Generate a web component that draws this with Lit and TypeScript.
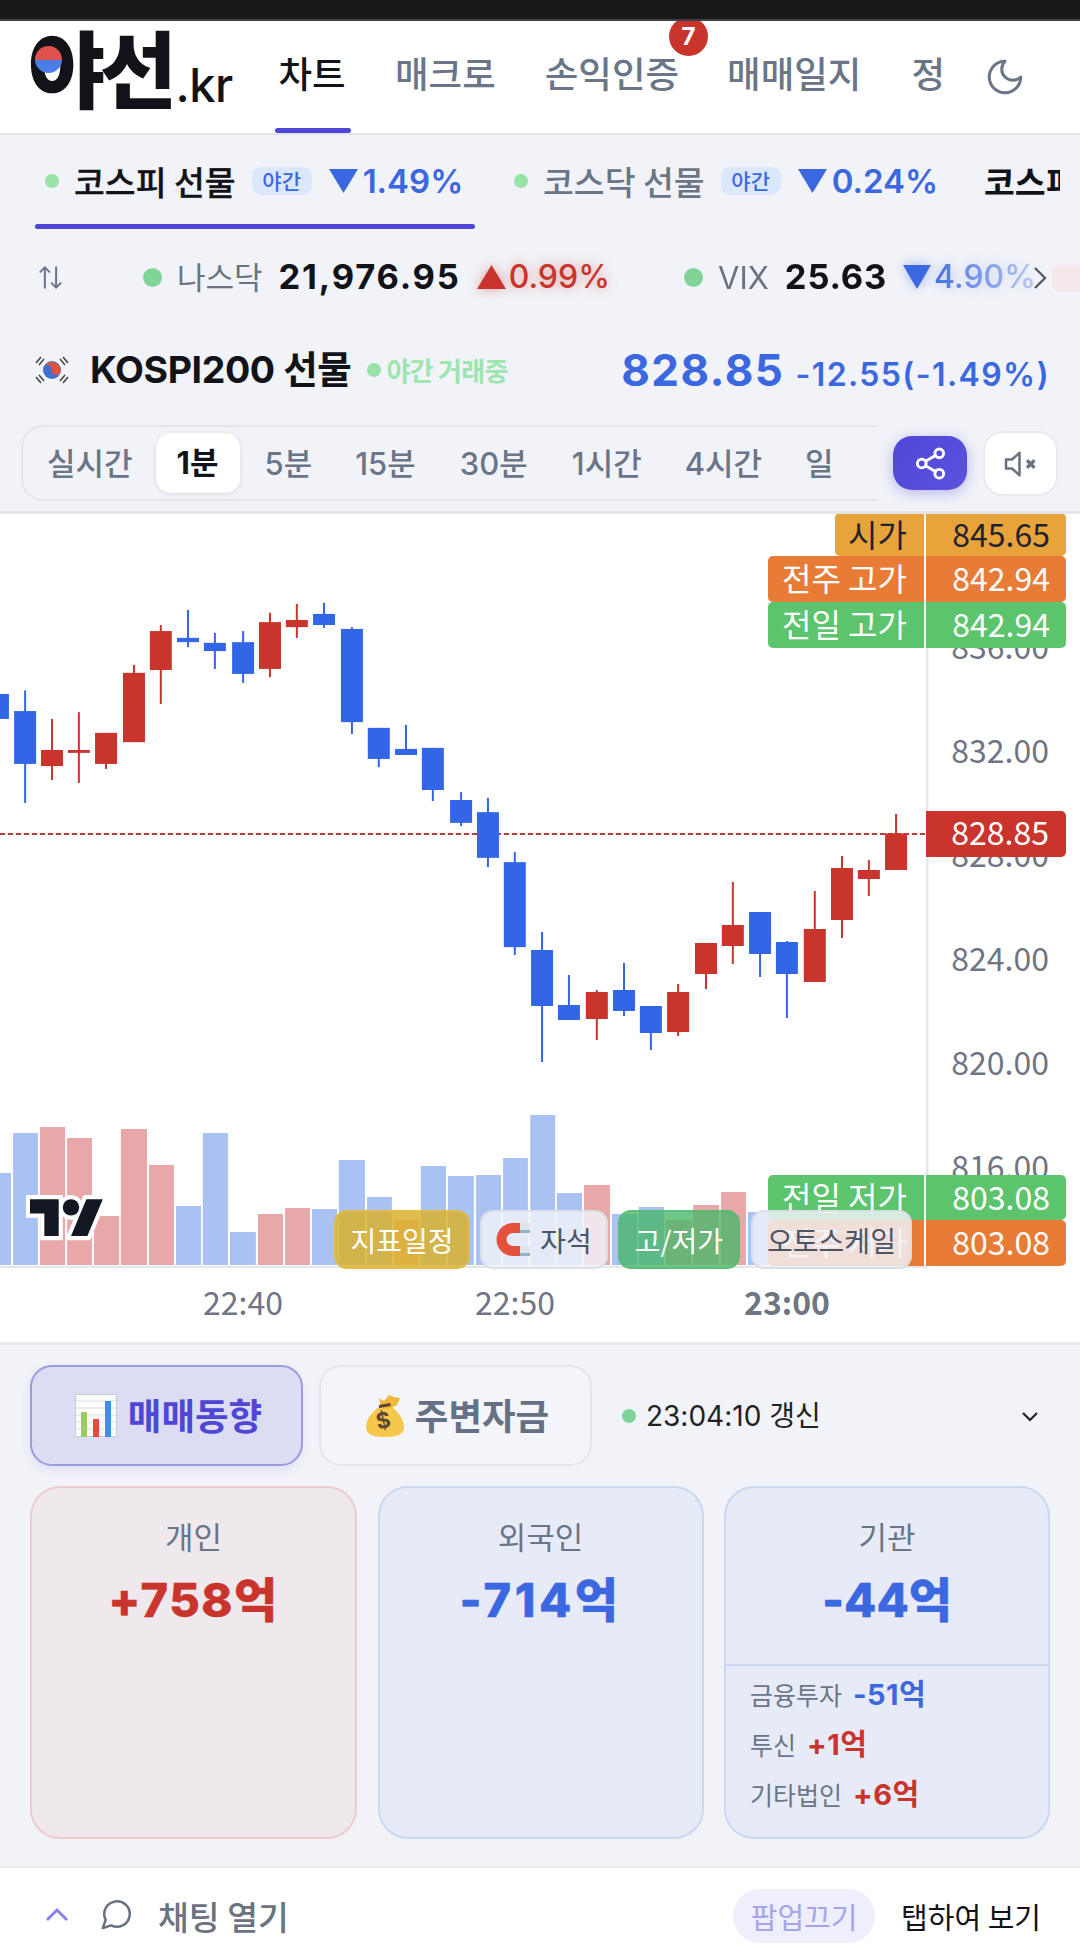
import { LitElement, html, css, svg } from "lit";
import { customElement } from "lit/decorators.js";

const RED = "#c9342c";
const BLUE = "#3366e6";
// [cx, top, bottom, wickTop, wickBottom, isRed] in page pixels
const z5 = (cx: number, t: number, b: number, wt: number, wb: number, r: number) =>
  [cx / 2.904, 510 + t / 2.8, 510 + b / 2.8, 510 + wt / 2.8, 510 + wb / 2.8, r];
const z11 = (cx: number, t: number, b: number, wt: number, wb: number, r: number) =>
  [540 + cx / 2.904, 660 + t / 3, 660 + b / 3, 660 + wt / 3, 660 + wb / 3, r];
const candles = [
  z5(-6, 515, 585, 515, 585, 0), z5(73, 563, 711, 505, 820, 0), z5(151, 672, 717, 585, 756, 1),
  z5(229, 672, 680, 566, 764, 1), z5(308, 624, 711, 624, 725, 1), z5(389, 456, 650, 434, 650, 1),
  z5(467, 339, 448, 322, 543, 1), z5(546, 358, 370, 280, 384, 0), z5(624, 372, 395, 344, 445, 0),
  z5(706, 370, 459, 339, 484, 0), z5(784, 314, 445, 288, 468, 1), z5(862, 308, 328, 263, 358, 1),
  z5(941, 291, 322, 260, 330, 0), z5(1022, 333, 594, 328, 627, 0), z5(1100, 610, 697, 610, 720, 0),
  z5(1179, 669, 686, 602, 686, 0), z5(1257, 666, 784, 666, 815, 0), z5(1339, 812, 876, 790, 885, 0),
  z5(1417, 846, 974, 806, 1000, 0), z5(1495, 986, 1224, 958, 1246, 0),
  z11(6, 870, 1038, 816, 1206, 0), z11(84, 1035, 1080, 945, 1080, 0), z11(165, 996, 1077, 990, 1140, 1),
  z11(244, 990, 1053, 909, 1068, 0), z11(322, 1038, 1119, 1038, 1170, 0), z11(401, 996, 1116, 972, 1128, 1),
  z11(482, 849, 942, 849, 987, 1), z11(560, 795, 858, 666, 912, 1), z11(639, 756, 882, 756, 951, 0),
  z11(717, 846, 942, 843, 1074, 0), z11(798, 807, 966, 693, 966, 1), z11(877, 624, 780, 588, 834, 1),
  z11(955, 630, 657, 600, 708, 1), z11(1034, 520, 630, 462, 630, 1),
];
// volume: [left, right, top, isRed] in page px
const vz = (l: number, r: number, t: number, red: number) => [l / 2.904, r / 2.904, 1070 + t / 3, red];
const vz7 = (l: number, r: number, t: number, red: number) => [540 + l / 2.904, 540 + r / 2.904, 1070 + t / 3, red];
const vols = [
  vz(-30, 32, 309, 0), vz(38, 110, 189, 0), vz(116, 189, 171, 1), vz(195, 267, 204, 1), vz(273, 346, 438, 1),
  vz(351, 427, 177, 1), vz(433, 505, 285, 1), vz(511, 584, 408, 0), vz(589, 662, 189, 0), vz(668, 743, 486, 0),
  vz(749, 822, 432, 1), vz(828, 900, 414, 1), vz(906, 979, 417, 0), vz(984, 1060, 270, 0), vz(1066, 1138, 381, 0),
  vz(1144, 1216, 450, 1), vz(1222, 1295, 288, 0), vz(1301, 1376, 318, 0), vz(1382, 1455, 315, 0), vz(1461, 1533, 264, 0),
  [530.3, 555.2, 1070 + 135 / 3, 0], vz7(49, 122, 369, 0), vz7(128, 203, 345, 1), vz7(209, 282, 432, 0), vz7(287, 360, 411, 0),
  vz7(365, 440, 450, 1), vz7(445, 520, 405, 1), vz7(526, 598, 366, 1), vz7(604, 680, 426, 0), vz7(686, 760, 440, 1),
];
const ticks = [["836.00", 648], ["832.00", 752], ["828.00", 856], ["824.00", 960], ["820.00", 1064], ["816.00", 1168]];
const tags = [
  { y: 513, h: 43, lx: 835, bg: "#e8a33a", fg: "#1f2430", l: "시가", v: "845.65" },
  { y: 556, h: 46, lx: 768, bg: "#e87b35", fg: "#fff", l: "전주 고가", v: "842.94" },
  { y: 602, h: 46, lx: 768, bg: "#5cc46c", fg: "#fff", l: "전일 고가", v: "842.94" },
  { y: 1175, h: 45, lx: 768, bg: "#5cc46c", fg: "#fff", l: "전일 저가", v: "803.08" },
  { y: 1220, h: 46, lx: 768, bg: "#e87b35", fg: "#fff", l: "전주 저가", v: "803.08" },
];

const tri = (up: boolean, w: number, h: number, c: string) => html`<svg class="tri ${up ? "up" : "dn"}" width=${w} height=${h} viewBox="0 0 10 10" preserveAspectRatio="none"><polygon points=${up ? "0,10 10,10 5,0" : "0,0 10,0 5,10"} fill=${c}></polygon></svg>`;

@customElement("app-root")
export class AppRoot extends LitElement {
  static styles = css`
    :host { display: block; width: 1080px; height: 1945px; overflow: hidden; background: #f1f3f8; position: relative;
      font-family: Inter, "Noto Sans CJK KR", sans-serif; color: #111318; font-variant-numeric: tabular-nums; }
    * { box-sizing: border-box; }
    .status { height: 21px; background: #18181b; border-bottom: 2px solid #3f3f46; position: relative; z-index: 3; }
    header { height: 114px; background: #fff; border-bottom: 2px solid #e4e5e9; display: flex; align-items: flex-start; position: relative; overflow: visible; }
    .logo { position: relative; display: flex; align-items: baseline; margin-left: 28px; width: 248px; height: 112px; line-height: 1; flex: none; }
    .logo b { font: 900 84px/1 "Noto Sans CJK KR", sans-serif; letter-spacing: -5.5px; margin-top: 3px; color: #111318; }
    .logo span { font: 500 47px/1 Inter, sans-serif; margin-left: 4px; letter-spacing: -.5px; color: #111318; }
    .logo i { position: absolute; left: 7px; top: 25px; width: 27px; height: 27px; border-radius: 50%; overflow: hidden;
      background: linear-gradient(#e0514b 0 50%, #4a7de8 50% 100%); }
    nav { display: flex; font: 500 36.5px/1 "Noto Sans CJK KR", sans-serif; color: #6b7588; }
    nav a { display: block; position: relative; height: 112px; line-height: 103px; white-space: nowrap; flex: none; }
    nav a.on { color: #111318; width: 72px; text-align: center; }
    nav a.on::after { content: ""; position: absolute; left: -1px; right: -3px; bottom: 0; height: 5px; border-radius: 3px; background: #4f46d5; }
    .badge { position: absolute; left: 669px; top: -4px; width: 39px; height: 39px; border-radius: 50%; background: #c9342c; color: #fff;
      font: 700 24px/39px Inter, sans-serif; text-align: center; }
    .moon { position: absolute; left: 984px; top: 35px; }

    .tabs { height: 95px; display: flex; position: relative; overflow: hidden; width: 1060px; }
    .tab { position: relative; display: flex; align-items: center; height: 92px; flex: none; }
    .tab .dot { width: 14px; height: 14px; border-radius: 50%; background: #97e3a8; flex: none; }
    .tab .nm { font: 500 33.500px/1 "Noto Sans CJK KR", sans-serif; white-space: nowrap; }
    .tab .bd { width: 60px; height: 28px; border-radius: 9px; background: #dbe7fb; color: #3b67e0; font: 500 21px/27px "Noto Sans CJK KR", sans-serif; text-align: center; flex: none; margin-left: 16px; }
    .tab .pc { font: 600 33px/1 Inter, sans-serif; color: #3b67e0; }
    .tab .tri { margin-left: 17px; margin-right: 5px; }
    .tab.a { width: 479px; padding-left: 45px; }
    .tab.a::after { content: ""; position: absolute; left: 35px; width: 440px; top: 89px; height: 5px; border-radius: 3px; background: #4f46d5; }
    .tab.a .nm { margin-left: 15px; font-weight: 500; -webkit-text-stroke: .3px #111318; }
    .tab.b { width: 471px; padding-left: 35px; } .tab.b .nm { margin-left: 15px; color: #6b7588; font-weight: 500; }
    .tab.c { padding-left: 34px; } .tab.c .nm { font-weight: 700; color: #111318; }

    .ticker { height: 94px; display: flex; align-items: center; position: relative; }
    .arrows { margin-left: 37px; margin-right: 79px; flex: none; }
    .tk { display: flex; align-items: center; flex: none; white-space: nowrap; }
    .tk .d { width: 19px; height: 19px; border-radius: 50%; background: #80d498; flex: none; }
    .tk .n { font: 400 31px/1 Inter, "Noto Sans CJK KR", sans-serif; color: #6b7280; margin-left: 15px; }
    .tk .p { font: 700 34.500px/1 Inter, sans-serif; margin-left: 16px; letter-spacing: 1.8px; }
    .tk .c { font: 500 32px/1 Inter, sans-serif; margin-left: 3px; }
    .tk .tri { margin-left: 16px; }
    .tk .c.up { color: #c9342c; text-shadow: 0 0 12px rgba(201,52,44,.45); }
    .tk .c.dn { color: #3b67e0; text-shadow: 0 0 12px rgba(59,103,224,.4); }
    .tk .tri.up { filter: drop-shadow(0 0 6px rgba(201,52,44,.45)); }
    .tk .tri.dn { filter: drop-shadow(0 0 6px rgba(59,103,224,.45)); }
    .tk2 { position: absolute; left: 684px; top: 0; height: 94px; width: 352px; overflow: hidden;
      -webkit-mask-image: linear-gradient(90deg, #000 0 240px, rgba(0,0,0,.3) 100%); mask-image: linear-gradient(90deg, #000 0 240px, rgba(0,0,0,.3) 100%); }
    .tk2 .p { letter-spacing: .8px; }
    .next { position: absolute; left: 1033px; top: 36px; }
    .ghost { position: absolute; left: 1052px; top: 35px; width: 40px; height: 27px; border-radius: 8px; background: #f6e8ea; }

    .title { height: 92px; display: flex; align-items: center; padding-left: 34px; position: relative; white-space: nowrap; }
    .title h1 { margin: 0 0 0 20px; font: 700 37.5px/1 Inter, "Noto Sans CJK KR", sans-serif; letter-spacing: -.4px; }
    .title .d { width: 14px; height: 14px; border-radius: 50%; background: #97e3a8; margin-left: 16px; flex: none; }
    .title .live { font: 600 26px/1 "Noto Sans CJK KR", sans-serif; color: #9ce5ae; margin-left: 5px; letter-spacing: -.7px; }
    .price { margin-left: auto; margin-right: 30px; display: flex; align-items: baseline; color: #3b67e0; }
    .price b { font: 700 44px/1 Inter, sans-serif; letter-spacing: 1.5px; }
    .price span { font: 600 32px/1 Inter, sans-serif; margin-left: 11px; letter-spacing: 1.4px; }

    .tfrow { height: 95px; position: relative; padding: 9px 0 0 21px; }
    .tf { width: 857px; height: 76px; border: 2px solid #e2e5ea; border-right: 0; border-radius: 22px 0 0 22px; display: flex; align-items: center; overflow: hidden; position: relative;
      font: 500 31px/1 Inter, "Noto Sans CJK KR", sans-serif; color: #6b7588; white-space: nowrap; padding-left: 24px; }
    .tf span { flex: none; }
    .tf .on { background: #fff; color: #111318; font-weight: 700; width: 84px; height: 60px; border-radius: 15px; line-height: 60px; text-align: center; box-shadow: 0 1px 5px rgba(0,0,0,.1); }
    .share { position: absolute; left: 893px; top: 20px; width: 74px; height: 54px; border-radius: 19px; background: linear-gradient(135deg,#4f46d5,#5c54e0); display: flex; align-items: center; justify-content: center; box-shadow: 0 3px 14px rgba(79,70,213,.35); }
    .mute { position: absolute; left: 983px; top: 15px; width: 75px; height: 65px; border-radius: 20px; background: #fff; border: 2px solid #e8eaef; display: flex; align-items: center; justify-content: center; }

    .chart { height: 834px; border-top: 3px solid #e3e5ea; background: #fff; position: relative; border-bottom: 3px solid #e9eaee; overflow: hidden; }
    .chart svg.cv { display: block; }
    .ax { font: 400 32px "Noto Sans CJK KR", sans-serif; fill: #6f7582; }
    .tag { position: absolute; display: flex; font: 400 32px/1 "Noto Sans CJK KR", sans-serif; border-radius: 0 5px 5px 0; }
    .tag .lb { position: absolute; top: 0; bottom: 0; right: 142px; display: flex; align-items: center; justify-content: flex-end; padding: 0 17px 4px 0; border-radius: 5px 0 0 5px; white-space: nowrap; }
    .tag .vl { width: 140px; height: 100%; display: flex; align-items: center; justify-content: flex-end; padding: 0 16px 4px 0; border-radius: 0 5px 5px 0; }
    .tools { position: absolute; left: 334px; top: 696px; display: flex; gap: 10px; }
    .tool { height: 59px; border-radius: 13px; display: flex; align-items: center; justify-content: center; gap: 9px; font: 400 28px/1 "Noto Sans CJK KR", sans-serif; white-space: nowrap; border: 2px solid transparent; flex: none; }
    .tool.g { width: 136px; background: rgba(218,178,44,.84); color: #fff; border-color: rgba(226,190,70,.7); }
    .tool.m { width: 128px; background: rgba(240,242,248,.84); color: #4b5563; border-color: rgba(216,219,228,.8); }
    .tool.h { width: 122px; background: rgba(72,182,104,.78); color: #fff; border-color: rgba(80,190,110,.6); }
    .tool.a { width: 161px; background: rgba(240,242,248,.84); color: #4b5563; border-color: rgba(216,219,228,.9); margin-left: 1px; }

    .flow { padding: 20px 30px 0 30px; height: 521px; }
    .sw { display: flex; align-items: stretch; height: 101px; gap: 16px; }
    .st { width: 273px; border-radius: 22px; border: 2px solid #e4e6ec; background: #f3f5fa; display: flex; align-items: center; justify-content: center; gap: 11px; padding-left: 4px; font: 700 36.5px/1 "Noto Sans CJK KR", sans-serif; color: #667085; flex: none; }
    .st.on { background: #dcdcf3; border-color: #9c9ae0; color: #4f46d5; box-shadow: 0 4px 10px rgba(79,70,213,.1); }
    .upd { display: flex; align-items: center; margin-left: 14px; font: 400 28px/1 Inter, "Noto Sans CJK KR", sans-serif; color: #222; flex: 1; }
    .upd i { width: 14px; height: 14px; border-radius: 50%; background: #80d498; margin-right: 10px; }
    .upd svg { margin-left: auto; margin-right: 8px; }
    .cards { display: grid; grid-template-columns: 327px 326px 326px; column-gap: 20.5px; margin-top: 20px; height: 353px; }
    .card { border-radius: 30px; border: 2px solid #cbd8f1; background: #e7ebf7; text-align: center; overflow: hidden; display: flex; flex-direction: column; }
    .card.r { background: #efe8ec; border-color: #ebcdcf; }
    .card .top { height: 176px; padding-top: 28px; flex: none; }
    .card .l { font: 400 31px/40px "Noto Sans CJK KR", sans-serif; color: #6b7588; }
    .card .v { font: 800 47px/60px Inter, "Noto Sans CJK KR", sans-serif; margin-top: 14px; letter-spacing: 1.500px; -webkit-text-stroke: .4px currentColor; }
    .card .v.wide { letter-spacing: 3.5px; }
    .card .v.tight { letter-spacing: 0; }
    .v.r, .s b.r { color: #c9342c; } .v.b, .s b.b { color: #3b67e0; }
    .sub { border-top: 2px solid #cbd8f1; padding: 3px 0 0 24px; text-align: left; }
    .s { height: 50px; display: flex; align-items: center; gap: 11px; font: 400 25px/1 "Noto Sans CJK KR", sans-serif; color: #6b7588; }
    .s b { font: 700 29px/1 Inter, "Noto Sans CJK KR", sans-serif; letter-spacing: .5px; }

    footer { height: 79px; background: #fff; border-top: 2px solid #e9eaee; display: flex; align-items: center; position: absolute; left: 0; right: 0; top: 1866px; padding-top: 15px; }
    footer .up { margin-left: 44px; flex: none; }
    footer .ch { margin-left: 30px; flex: none; }
    footer .tt { font: 500 33.500px/1 "Noto Sans CJK KR", sans-serif; color: #6b7280; margin: 3px 0 0 24px; }
    footer .pill { margin-left: auto; width: 142px; height: 54px; border-radius: 27px; background: #eeeefc; color: #a5a5ea; font: 400 29px/54px "Noto Sans CJK KR", sans-serif; text-align: center; align-self: flex-start; margin-top: 6px; }
    footer .hint { font: 400 29px/54px "Noto Sans CJK KR", sans-serif; color: #111318; margin: 6px 39px 0 26px; align-self: flex-start; }
  `;

  chart() {
    return svg`
      ${vols.map((v) => svg`<rect x=${v[0]} y=${v[2]} width=${v[1] - v[0]} height=${1265 - v[2]} fill=${v[3] ? "#e8a7a9" : "#a9c1f3"}></rect>`)}
      ${ticks.map((t) => svg`<text class="ax" x="1049" y=${(t[1] as number) + 11} text-anchor="end">${t[0]}</text>`)}
      <line x1="0" x2="926" y1="834" y2="834" stroke="#b5403b" stroke-width="2" stroke-dasharray="5 3"></line>
      ${candles.map((c) => svg`<g fill=${c[5] ? RED : BLUE}>
        <rect x=${c[0] - 1} y=${c[3]} width="2" height=${c[4] - c[3]}></rect>
        <rect x=${c[0] - 11} y=${c[1]} width="22" height=${c[2] - c[1]}></rect></g>`)}
      <rect x="926" y="511" width="2.5" height="757" fill="#e5e7eb"></rect>
      <rect x="0" y="1266" width="928" height="2" fill="#e5e7eb"></rect>
      <text class="ax" x="243" y="1315" text-anchor="middle">22:40</text>
      <text class="ax" x="515" y="1315" text-anchor="middle">22:50</text>
      <text class="ax" x="787" y="1315" text-anchor="middle" style="font-weight:700">23:00</text>
      <g transform="translate(30,1191) scale(2.05)">
        <g stroke="#fff" stroke-width="4" fill="#fff"><path d="M14 22H7V11H0V4h14v18zM28 22h-8l7.5-18h8L28 22z"></path><circle cx="20" cy="8" r="4"></circle></g>
        <g fill="#131722"><path d="M14 22H7V11H0V4h14v18zM28 22h-8l7.5-18h8L28 22z"></path><circle cx="20" cy="8" r="4"></circle></g>
      </g>
      <path d="M926 811h135a5 5 0 0 1 5 5v36a5 5 0 0 1-5 5H926z" fill="#c9342c"></path>
      <text x="1049" y="845" text-anchor="end" class="ax" style="fill:#fff">828.85</text>
    `;
  }

  render() {
    return html`
      <div class="status"></div>
      <header>
        <div class="logo"><b>야선</b><span>.kr</span><i></i></div>
        <nav>
          <a class="on">차트</a>
          <a style="margin-left:47px">매크로</a>
          <a style="margin-left:49px">손익인증</a>
          <a style="margin-left:48px">매매일지</a>
          <a style="margin-left:50px">정</a>
        </nav>
        <span class="badge">7</span>
        <svg class="moon" width="42" height="42" viewBox="0 0 24 24" fill="none" stroke="#6b7588" stroke-width="1.7" stroke-linecap="round" stroke-linejoin="round"><path d="M12 3a6 6 0 0 0 9 9 9 9 0 1 1-9-9Z"></path></svg>
      </header>

      <div class="tabs">
        <div class="tab a"><span class="dot"></span><span class="nm">코스피 선물</span><span class="bd">야간</span>${tri(false, 29, 24, "#3b67e0")}<span class="pc">1.49%</span></div>
        <div class="tab b"><span class="dot"></span><span class="nm">코스닥 선물</span><span class="bd">야간</span>${tri(false, 29, 24, "#3b67e0")}<span class="pc">0.24%</span></div>
        <div class="tab c"><span class="nm">코스피 선물</span></div>
      </div>

      <div class="ticker">
        <svg class="arrows" width="27" height="27" viewBox="0 0 24 24" fill="none" stroke="#6b7588" stroke-width="1.8" stroke-linecap="round" stroke-linejoin="round"><path d="M7 21V3M3 7l4-4 4 4M17 3v18M13 17l4 4 4-4"></path></svg>
        <div class="tk"><span class="d"></span><span class="n">나스닥</span><span class="p">21,976.95</span>${tri(true, 29, 24, "#c9342c")}<span class="c up">0.99%</span></div>
        <div class="tk tk2"><span class="d"></span><span class="n">VIX</span><span class="p">25.63</span>${tri(false, 29, 24, "#3b67e0")}<span class="c dn">4.90%</span></div>
        <svg class="next" width="14" height="24" viewBox="0 0 14 24" fill="none" stroke="#555b66" stroke-width="2.4"><path d="M2 2l10 10L2 22"></path></svg>
        <span class="ghost"></span>
      </div>

      <div class="title">
        <svg width="36" height="30" viewBox="0 0 36 30">
          <circle cx="18" cy="15" r="9" fill="#3f6fd0"></circle>
          <path d="M9.300 13a9 9 0 0 1 17.400 4 4.500 4.500 0 0 1-8.700-2 4.500 4.500 0 0 0-8.700-2z" fill="#e2533f"></path>
          <g stroke="#444" stroke-width="1.5"><path d="M2 8l5-6M5 10l5-6M26 4l5 6M29 2l5 6M2 22l5 6M5 20l5 6M26 26l5-6M29 28l5-6"></path></g>
        </svg>
        <h1>KOSPI200 선물</h1><span class="d"></span><span class="live">야간 거래중</span>
        <div class="price"><b>828.85</b><span>-12.55(-1.49%)</span></div>
      </div>

      <div class="tfrow">
        <div class="tf">
          <span>실시간</span><span class="on" style="margin-left:23px">1분</span>
          <span style="margin-left:25px">5분</span><span style="margin-left:43px">15분</span><span style="margin-left:44px">30분</span>
          <span style="margin-left:44px">1시간</span><span style="margin-left:43px">4시간</span><span style="margin-left:43px">일</span><span style="margin-left:44px">주</span>
        </div>
        <div class="share"><svg width="35" height="35" viewBox="0 0 24 24" fill="none" stroke="#fff" stroke-width="2" stroke-linecap="round"><circle cx="18" cy="5" r="3"></circle><circle cx="6" cy="12" r="3"></circle><circle cx="18" cy="19" r="3"></circle><path d="M8.600 13.500l6.800 4M15.400 6.500l-6.800 4"></path></svg></div>
        <div class="mute"><svg width="36" height="36" viewBox="0 0 24 24" fill="none" stroke="#6b7280" stroke-width="1.7" stroke-linejoin="round"><path d="M11 4.500 6 9H2v6h4l5 4.500z"></path><path d="M16 9.500l5 5M21 9.500l-5 5" stroke-width="2.2"></path></svg></div>
      </div>

      <section class="chart">
        <svg class="cv" width="1080" height="828" viewBox="0 514 1080 828">${this.chart()}</svg>
        ${tags.map((t) => html`<div class="tag" style="left:926px;width:140px;top:${t.y - 514}px;height:${t.h}px;color:${t.fg}">
          <div class="lb" style="background:${t.bg};width:${924 - t.lx}px">${t.l}</div>
          <div class="vl" style="background:${t.bg}">${t.v}</div></div>`)}
        <div class="tools">
          <div class="tool g">지표일정</div>
          <div class="tool m"><svg width="35" height="35" viewBox="0 0 35 35"><path d="M24 1H17A16.500 16.500 0 0 0 17 34h7v-10h-7a6 6 0 0 1 0-13h7z" fill="#e3503c"></path><path d="M24 1h10v10H24zM24 24h10v10H24z" fill="#dfe4e8"></path><path d="M24 8h10v3H24zM24 31h10v3H24z" fill="#93b4c6"></path></svg><span>자석</span></div>
          <div class="tool h">고/저가</div>
          <div class="tool a">오토스케일</div>
        </div>
      </section>

      <section class="flow">
        <div class="sw">
          <div class="st on"><svg width="42" height="43" viewBox="0 0 42 43"><rect x=".5" y=".5" width="41" height="42" fill="#fdfdfd" stroke="#c9ccd2"></rect><path d="M1 7h40M1 14h40M1 21h40M1 28h40M1 35h40" stroke="#d9dde2"></path><rect x="6" y="18" width="6" height="25" fill="#9ccb62"></rect><rect x="18" y="25" width="6" height="18" fill="#e6493d"></rect><rect x="30" y="7" width="6" height="36" fill="#3f8fe6"></rect></svg><span>매매동향</span></div>
          <div class="st"><svg width="38" height="43" viewBox="0 0 38 43"><path d="M15 11C6 18 0 25 0 33c0 7 6 10 19 10s19-3 19-10c0-8-6-15-14-22z" fill="#f5c84c"></path><path d="M13 4l5 3 5-6 5 2 6 1-3 7-8 4-8-2z" fill="#f0b93a"></path><path d="M13 11l11-2 1 3-12 2z" fill="#5d4630"></path><text x="18" y="34" font-family="Inter, sans-serif" font-size="22" font-weight="700" fill="#5d4630" text-anchor="middle" transform="rotate(-12 18 30)">$</text></svg><span>주변자금</span></div>
          <div class="upd"><i></i><span>23:04:10 갱신</span><svg width="24" height="24" viewBox="0 0 24 24" fill="none" stroke="#222" stroke-width="2.2"><path d="M5 9l7 7 7-7"></path></svg></div>
        </div>
        <div class="cards">
          <div class="card r"><div class="top"><div class="l">개인</div><div class="v r">+758억</div></div></div>
          <div class="card"><div class="top"><div class="l">외국인</div><div class="v b wide">-714억</div></div></div>
          <div class="card"><div class="top"><div class="l">기관</div><div class="v b tight">-44억</div></div>
            <div class="sub">
              <div class="s">금융투자 <b class="b">-51억</b></div>
              <div class="s">투신 <b class="r">+1억</b></div>
              <div class="s">기타법인 <b class="r">+6억</b></div>
            </div>
          </div>
        </div>
      </section>

      <footer>
        <svg class="up" width="26" height="16" viewBox="0 0 26 16" fill="none" stroke="#8484ea" stroke-width="3"><path d="M3 14l10-10 10 10"></path></svg>
        <svg class="ch" width="34" height="34" viewBox="0 0 24 24" fill="none" stroke="#6b7280" stroke-width="1.8" stroke-linejoin="round"><path d="M7.900 20A9 9 0 1 0 4 16.100L2 22Z"></path></svg>
        <span class="tt">채팅 열기</span>
        <span class="pill">팝업끄기</span>
        <span class="hint">탭하여 보기</span>
      </footer>
    `;
  }
}
